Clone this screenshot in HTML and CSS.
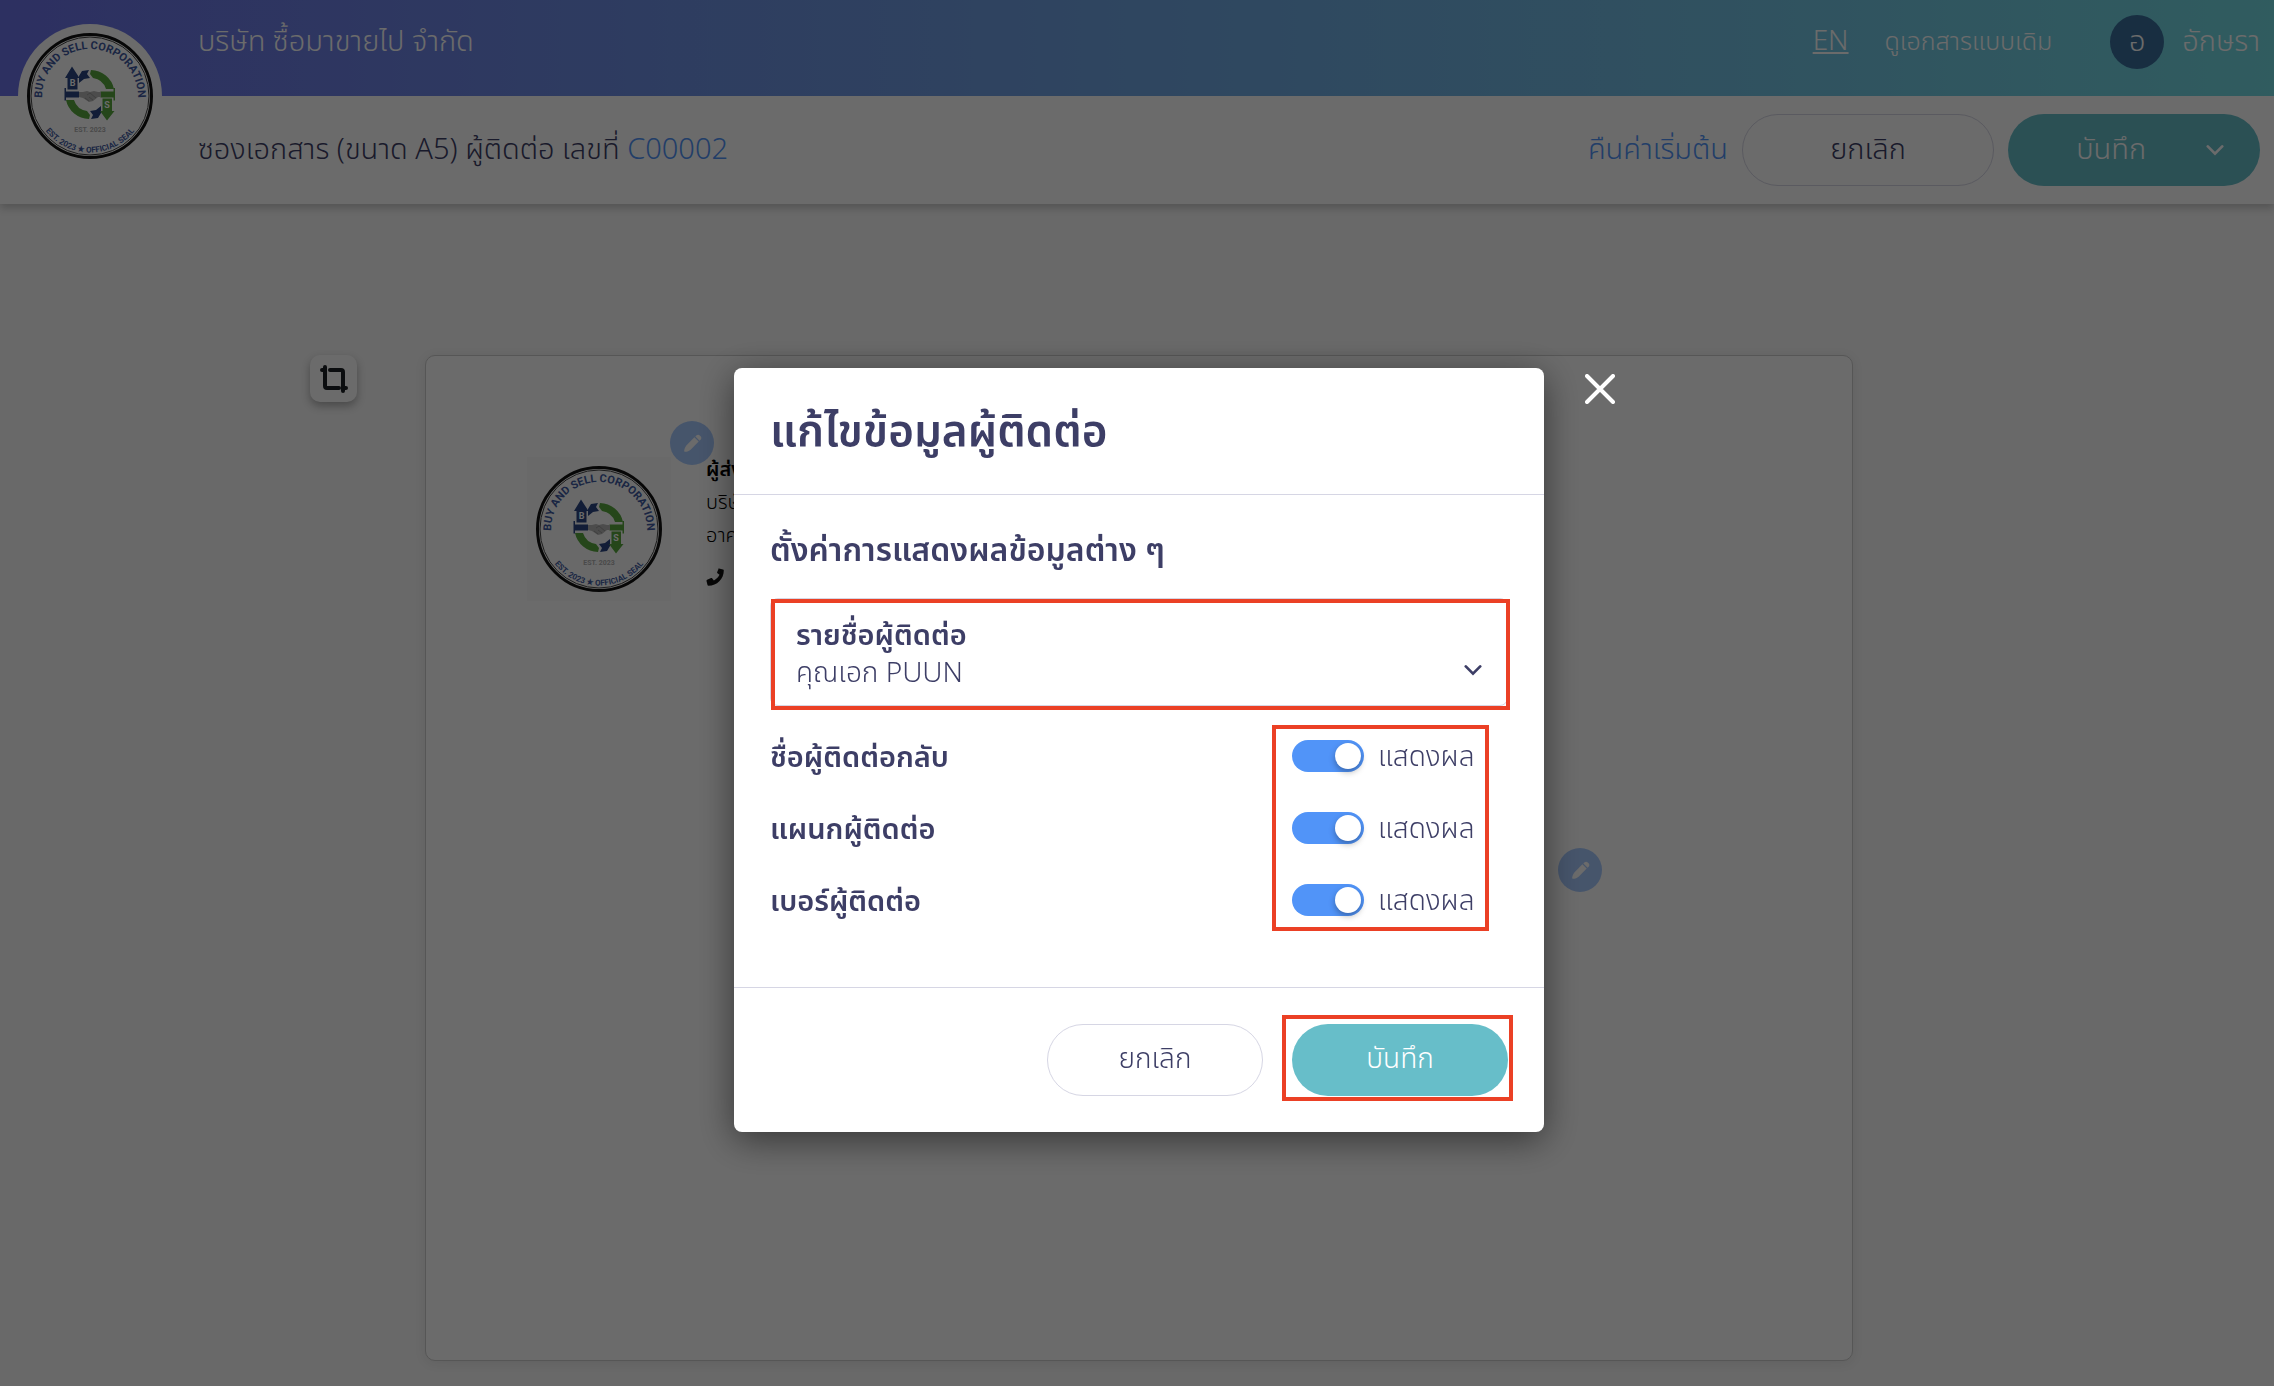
FILE: index.html
```html
<!DOCTYPE html>
<html lang="th">
<head>
  <meta charset="UTF-8">
  <meta name="viewport" content="width=device-width, initial-scale=1.0">
  <title>ซองเอกสาร C00002</title>
  <link rel="stylesheet" href="styles.css">
</head>
<body>

  <svg class="sprite" aria-hidden="true">
    <symbol id="seal" viewBox="0 0 144 144">
      <circle cx="72" cy="72" r="61.500" fill="none" stroke="#111" stroke-width="3"></circle>
      <circle cx="72" cy="72" r="59" fill="none" stroke="#444" stroke-width="1"></circle>
      <path id="seal-top" d="M24 73a48 48 0 0 1 96 0" fill="none"></path>
      <path id="seal-bottom" d="M15.500 72a56.500 56.500 0 0 0 113 0" fill="none"></path>
      <text class="seal-text seal-name"><textPath href="#seal-top" startOffset="50%">BUY AND SELL CORPORATION</textPath></text>
      <text class="seal-text seal-foot"><textPath href="#seal-bottom" startOffset="50%">EST. 2023 ★ OFFICIAL SEAL</textPath></text>
      <!-- arrows -->
      <path d="M73 46a24 24 0 0 1 23 19h-8a16 16 0 0 0-13-11l-3-4z" fill="#58a83f"></path>
      <path d="M71 95a24 24 0 0 1-23-19h8a16 16 0 0 0 13 11l3 4z" fill="#58a83f"></path>
      <path d="M61 52l3-5 7-1-2 4 3 4-6 1-5 4zM83 89l-3 5-7 1 2-4-3-4 6-1 5-4z" fill="#2b4783"></path>
      <path d="M54 42.500l7.500 11.500h-2v11.500h-10v-11.500h-2.500zM46.500 64h1.500v3.500h13v6h-13v3h-1.500z" fill="#2b4783"></path>
      <path d="M89 96.500l7.500-9.500h-2.500v-12.500h-9.500v12.500h-2.500zM97 64h-1.500v3.500h-13v6h13v3h1.500z" fill="#58a83f"></path>
      <path d="M61 68h4l4-1 3 1 4-1 4 1h3v5h-3l-5 4-4 1-6-4-4-1z" fill="#b5b5b5"></path>
      <path d="M69 71l3-2 6 5M67 74l4 3M71 73l4 3" fill="none" stroke="#8a8a8a" stroke-width="0.700"></path>
      <text class="seal-letter" x="54.500" y="62">B</text>
      <text class="seal-letter" x="89" y="84">S</text>
      <text class="seal-est" x="72" y="108">EST. 2023</text>
    </symbol>
    <symbol id="pencil" viewBox="0 0 20 20">
      <path d="M12 3.500l4.500 4.500-8.500 8.500c-1.500 1.200-3.500 2-6 2.300-.600 0-.800-.200-.800-.800.300-2.500 1.100-4.500 2.300-6zM13 2.500l1-1c1.200-1 2.600-1 3.700 0l.800.800c1.100 1.100 1.100 2.500 0 3.700l-1 1z" fill="currentColor"></path>
    </symbol>
    <symbol id="chevron" viewBox="0 0 20 12">
      <path d="M2 2l8 8 8-8" fill="none" stroke="currentColor" stroke-width="3" stroke-linecap="round"></path>
    </symbol>
  </svg>

  <header class="topbar">
    <svg class="logo"><use href="#seal"></use></svg>
    <p class="company">บริษัท ซื้อมาขายไป จำกัด</p>
    <nav class="topbar-menu">
      <a href="#" class="lang">EN</a>
      <a href="#" class="old-view">ดูเอกสารแบบเดิม</a>
      <a href="#" class="user"><span class="avatar">อ</span>อักษรา</a>
    </nav>
  </header>

  <div class="toolbar">
    <h1 class="doc-title">ซองเอกสาร (ขนาด A5) ผู้ติดต่อ เลขที่ <a href="#">C00002</a></h1>
    <div class="toolbar-actions">
      <a href="#">คืนค่าเริ่มต้น</a>
      <button class="button">ยกเลิก</button>
      <button class="button button-save button-split">บันทึก <svg class="chevron"><use href="#chevron"></use></svg></button>
    </div>
  </div>

  <main class="workspace">
    <button class="crop-button" aria-label="ครอบตัด">
      <svg viewBox="0 0 28 28" fill="none" stroke="#1c2024" stroke-width="4" stroke-linecap="round">
        <path d="M5 2v19q0 2 2 2h12M2 5h3M10 5h11q2 0 2 2v19M23 23h3"></path>
      </svg>
    </button>
    <section class="envelope">
      <div class="sender">
        <svg class="sender-logo"><use href="#seal"></use></svg>
        <div class="sender-info">
          <p><b>ผู้ส่ง</b></p>
          <p>บริษัท ซื้อมาขายไป</p>
          <p>อาคาร</p>
          <svg class="phone" viewBox="0 0 18 18"><path d="M13 .500l4 1c.500.100.800.500.800 1C17.800 11 11 17.800 2.500 17.800c-.500 0-.900-.300-1-.800l-1-4c-.100-.500.100-1 .600-1.200l4-1.700c.400-.200.900-.100 1.200.300l1.600 2c2.500-1.200 4.400-3.100 5.600-5.600l-2-1.600c-.400-.300-.500-.800-.300-1.200l1.700-4c0-.400.100-.500.100-.500z" fill="#111"></path></svg>
        </div>
        <button class="edit-button edit-sender" aria-label="แก้ไขผู้ส่ง"><svg><use href="#pencil"></use></svg></button>
      </div>
      <button class="edit-button edit-receiver" aria-label="แก้ไขผู้รับ"><svg><use href="#pencil"></use></svg></button>
    </section>
  </main>

  <div class="overlay">
    <div class="modal" role="dialog" aria-labelledby="modal-title">
      <button class="close-button" aria-label="ปิด">
        <svg viewBox="0 0 30 30"><path d="M2 2l26 26M28 2L2 28" fill="none" stroke="#fff" stroke-width="4" stroke-linecap="round"></path></svg>
      </button>

      <div class="modal-header">
        <h2 id="modal-title">แก้ไขข้อมูลผู้ติดต่อ</h2>
      </div>

      <div class="modal-body">
        <h3>ตั้งค่าการแสดงผลข้อมูลต่าง ๆ</h3>

        <div class="field highlight">
          <label for="contact">รายชื่อผู้ติดต่อ</label>
          <select id="contact">
            <option>คุณเอก PUUN</option>
          </select>
          <svg class="chevron"><use href="#chevron"></use></svg>
        </div>

        <div class="settings">
          <div class="setting-names">
            <label for="show-name">ชื่อผู้ติดต่อกลับ</label>
            <label for="show-department">แผนกผู้ติดต่อ</label>
            <label for="show-phone">เบอร์ผู้ติดต่อ</label>
          </div>
          <div class="switches highlight">
            <label><input type="checkbox" id="show-name" checked><span>แสดงผล</span></label>
            <label><input type="checkbox" id="show-department" checked><span>แสดงผล</span></label>
            <label><input type="checkbox" id="show-phone" checked><span>แสดงผล</span></label>
          </div>
        </div>
      </div>

      <div class="modal-footer">
        <button class="button">ยกเลิก</button>
        <div class="save highlight">
          <button class="button button-save">บันทึก</button>
        </div>
      </div>
    </div>
  </div>

</body>
</html>
```
FILE: styles.css
```css
* {
  box-sizing: border-box;
}

body {
  margin: 0;
  background-color: #f9f9f9;
  color: #3d3e66;
  font-family: "Noto Sans Thai", "Prompt", "Open Sans", "Noto Sans", sans-serif;
  font-size: 28px;
  font-weight: 300;
  line-height: 36px;
}

h1, h2, h3, p {
  margin: 0;
}

a {
  color: #5194f8;
  text-decoration: none;
}

button, select {
  font: inherit;
  color: inherit;
}

button {
  padding: 0;
  border: none;
  cursor: pointer;
}

.sprite {
  position: absolute;
  width: 0;
  height: 0;
}

/* company seal */

.seal-text {
  fill: #3f5aa0;
  font-family: "Liberation Sans Narrow", "Roboto", sans-serif;
  font-weight: bold;
  text-anchor: middle;
}

.seal-name {
  font-size: 11px;
}

.seal-foot {
  font-size: 8px;
}

.seal-letter, .seal-est {
  font-family: "Liberation Sans Narrow", "Roboto", sans-serif;
  font-weight: bold;
  text-anchor: middle;
}

.seal-letter {
  fill: white;
  font-size: 9px;
}

.seal-est {
  fill: #b0b0b0;
  font-size: 7px;
}

/* top of the page */

.topbar {
  display: flex;
  align-items: center;
  height: 96px;
  padding: 0 14px 12px 198px;
  background: linear-gradient(90deg, #6d72e6, #74dbe3);
  color: white;
  font-size: 29px;
  position: relative;
}

.topbar a {
  color: white;
}

.logo {
  position: absolute;
  left: 18px;
  top: 24px;
  width: 144px;
  height: 144px;
  border-radius: 50%;
  background-color: white;
}

.topbar-menu {
  display: flex;
  align-items: center;
  margin-left: auto;
}

.topbar-menu .lang {
  font-size: 28px;
  text-decoration: underline;
  margin-right: 36px;
}

.old-view {
  font-size: 25px;
  margin-right: 58px;
}

.user {
  display: flex;
  align-items: center;
  gap: 18px;
}

.avatar {
  width: 54px;
  height: 54px;
  border-radius: 50%;
  background-color: #396f9b;
  line-height: 54px;
  text-align: center;
}

.toolbar {
  display: flex;
  align-items: center;
  justify-content: space-between;
  height: 108px;
  padding: 0 14px 0 198px;
  background-color: white;
  box-shadow: 0 4px 8px rgba(0, 0, 0, 0.2);
  font-size: 29px;
}

.doc-title {
  font-size: 29px;
  font-weight: 300;
}

.toolbar-actions {
  display: flex;
  align-items: center;
  gap: 14px;
}

.button {
  width: 216px;
  height: 72px;
  border: 1px solid #d6d6e4;
  border-radius: 36px;
  background-color: white;
}

.toolbar .button {
  width: 252px;
}

.button.button-save {
  border: none;
  background-color: #67bec9;
  color: white;
}

.button-split {
  display: flex;
  align-items: center;
  justify-content: flex-end;
  gap: 60px;
  padding-right: 36px;
}

.chevron {
  width: 18px;
  height: 12px;
}

/* envelope preview */

.workspace {
  display: flex;
  align-items: flex-start;
  gap: 68px;
  padding: 151px 421px 24px 310px;
}

.crop-button {
  display: flex;
  align-items: center;
  justify-content: center;
  width: 47px;
  height: 47px;
  border-radius: 10px;
  background-color: white;
  box-shadow: 0 4px 8px rgba(0, 0, 0, 0.3);
}

.crop-button svg {
  width: 28px;
  height: 28px;
}

.envelope {
  position: relative;
  flex: 1;
  aspect-ratio: 210 / 148;
  padding: 98px 101px;
  border: 1px solid #ccc;
  border-radius: 10px;
  background-color: white;
  box-shadow: 0 2px 12px rgba(0, 0, 0, 0.08);
}

.sender {
  position: relative;
  display: flex;
  gap: 35px;
  color: black;
  font-size: 20px;
  line-height: 33px;
}

.sender-logo {
  width: 144px;
  height: 144px;
  margin-top: 3px;
  background-color: #fafafa;
}

.sender-info b {
  font-weight: 600;
}

.phone {
  display: block;
  width: 18px;
  height: 18px;
  margin-top: 15px;
}

.edit-button {
  position: absolute;
  display: flex;
  align-items: center;
  justify-content: center;
  width: 44px;
  height: 44px;
  border-radius: 50%;
  background-color: #a8caff;
  color: white;
}

.edit-button svg {
  width: 19px;
  height: 19px;
}

.edit-sender {
  left: 143px;
  top: -33px;
}

.edit-receiver {
  right: 250px;
  top: 49%;
}

/* modal */

.overlay {
  position: fixed;
  inset: 0;
  display: flex;
  align-items: flex-start;
  justify-content: center;
  padding: 368px 0 0 4px;
  background-color: rgba(0, 0, 0, 0.58);
}

.modal {
  position: relative;
  width: 810px;
  border-radius: 8px;
  background-color: white;
  box-shadow: 0 8px 36px rgba(0, 0, 0, 0.5);
}

.close-button {
  position: absolute;
  left: 100%;
  top: 6px;
  width: 30px;
  height: 30px;
  margin-left: 41px;
  background-color: transparent;
}

.close-button svg {
  display: block;
}

.modal-header {
  padding: 38px 36px 34px;
  border-bottom: 1px solid #d6d6e4;
}

.modal-header h2 {
  font-size: 44px;
  font-weight: 600;
  line-height: 54px;
}

.modal-body {
  padding: 38px 36px 51px;
}

.modal-body h3 {
  font-size: 32px;
  font-weight: 600;
  line-height: 36px;
}

.highlight {
  position: relative;
}

.highlight::after {
  content: "";
  position: absolute;
  inset: 0;
  border: 4px solid #eb4025;
  pointer-events: none;
}

.field {
  height: 108px;
  margin-top: 29px;
  padding: 18px 25px;
  border: 1px solid #d6d6e4;
  border-radius: 8px;
  line-height: 38px;
}

.field::after {
  inset: 0 -3px -5px 0;
}

.field label {
  display: block;
  font-size: 29px;
  font-weight: 600;
}

.field select {
  display: block;
  width: 100%;
  padding: 0;
  border: none;
  background-color: transparent;
  line-height: 38px;
  appearance: none;
}

.field .chevron {
  position: absolute;
  right: 25px;
  bottom: 29px;
}

.settings {
  display: flex;
  justify-content: space-between;
  margin-top: 14px;
}

.setting-names, .switches {
  display: flex;
  flex-direction: column;
}

.setting-names label {
  height: 72px;
  padding-top: 4px;
  font-size: 29px;
  font-weight: 600;
  line-height: 68px;
}

.switches {
  width: 216px;
}

.switches::after {
  inset: 5px 19px 5px -20px;
}

.switches label {
  display: flex;
  align-items: center;
  gap: 14px;
  height: 72px;
}

.switches span {
  padding-top: 4px;
}

.switches input {
  appearance: none;
  display: flex;
  justify-content: flex-end;
  width: 72px;
  height: 32px;
  margin: 0;
  padding: 3px;
  border-radius: 16px;
  background-color: #5194f8;
}

.switches input::before {
  content: "";
  width: 26px;
  height: 26px;
  border-radius: 50%;
  background-color: white;
  box-shadow: 0 3px 6px rgba(0, 0, 0, 0.3);
}

.modal-footer {
  display: flex;
  justify-content: flex-end;
  gap: 29px;
  padding: 36px;
  border-top: 1px solid #d6d6e4;
}

.save::after {
  inset: -9px -5px -5px -10px;
}

.save .button {
  display: block;
}
```
